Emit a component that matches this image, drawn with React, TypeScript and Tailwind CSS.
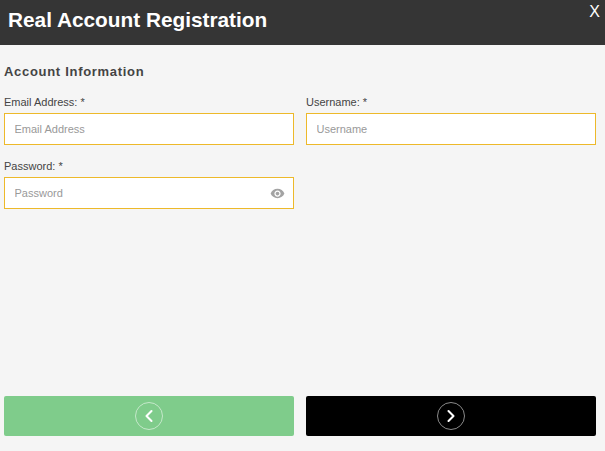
import { ChevronLeft, ChevronRight } from 'lucide-react';
import { MdVisibility } from 'react-icons/md';

function Field({ label, placeholder, eye }: { label: string; placeholder: string; eye?: boolean }) {
  return (
    <div>
      <label className="block text-[11px] leading-[12px] text-[#444] mb-[5px]">{label}</label>
      <div className="flex items-center h-[32px] bg-white border border-[#edb92a] pl-[9.5px] pr-[8px]">
        <input
          placeholder={placeholder}
          className="flex-1 min-w-0 bg-transparent outline-none text-[11px] placeholder:text-[#999]"
        />
        {eye && <MdVisibility size={15} className="text-[#a3a3a3]" />}
      </div>
    </div>
  );
}

export default function App() {
  return (
    <div className="relative flex flex-col w-[605px] h-[451px] bg-[#f5f5f5] font-['Liberation_Sans',Arial,sans-serif] overflow-hidden">
      {/* Header */}
      <div className="flex items-center h-[45px] pl-[8px] pb-[6px] bg-[#353535]">
        <h1 className="text-[20.8px] font-bold text-white">Real Account Registration</h1>
        <span className="absolute top-[1px] right-[5px] text-[16px] leading-[22px] text-white">X</span>
      </div>

      <div className="flex flex-col flex-1 pl-[4px] pr-[9px]">
        <h2 className="mt-[19px] text-[13px] leading-[16px] font-bold tracking-[0.7px] text-[#444]">Account Information</h2>

        <div className="grid grid-cols-2 gap-x-[12px] gap-y-[15px] mt-[16px]">
          <Field label="Email Address: *" placeholder="Email Address" />
          <Field label="Username: *" placeholder="Username" />
          <Field label="Password: *" placeholder="Password" eye />
        </div>

        {/* Nav buttons */}
        <div className="grid grid-cols-2 gap-x-[12px] mt-auto mb-[15px]">
          <button className="flex items-center justify-center h-[40px] rounded-[2px] bg-[#7fcc8b]">
            <span className="flex items-center justify-center w-[28px] h-[28px] rounded-full border border-[#c5e8ca] text-white">
              <ChevronLeft size={20} strokeWidth={2.5} />
            </span>
          </button>
          <button className="flex items-center justify-center h-[40px] rounded-[2px] bg-black">
            <span className="flex items-center justify-center w-[28px] h-[28px] rounded-full border border-[#8a8a8a] text-white">
              <ChevronRight size={20} strokeWidth={2.5} />
            </span>
          </button>
        </div>
      </div>
    </div>
  );
}
